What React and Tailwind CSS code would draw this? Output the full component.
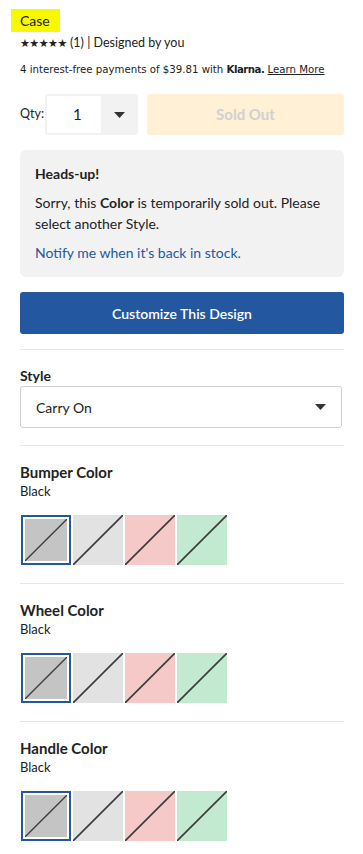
import React from 'react';

const font = { fontFamily: 'Lato, "Open Sans", sans-serif' };

const swatches = ['#c4c4c4', '#e2e2e2', '#f6c9c9', '#c2ead0'];

const Swatch = ({ color, selected }) => (
    <div
        className={`w-[50px] h-[50px] ${selected ? 'border-2 border-[#2358a0] p-[2px] bg-white' : ''}`}
    >
        <svg className="block w-full h-full" viewBox="0 0 10 10" preserveAspectRatio="none">
            <rect width="10" height="10" fill={color} />
            <line x1="0" y1="10" x2="10" y2="0" stroke="#3a3a3a" strokeWidth="0.32" />
        </svg>
    </div>
);

const ColorSection = ({ title }) => (
    <div className="border-t border-[#e6e6e6] pt-[16px] pb-[18px]">
        <h3 className="text-[15px] leading-[20px] font-bold text-[#222]">{title}</h3>
        <p className="text-[13px] leading-[18px] text-[#222]">Black</p>
        <div className="flex gap-[2px] mt-[15px] ml-[1px]">
            {swatches.map((c, i) => (
                <Swatch key={c} color={c} selected={i === 0} />
            ))}
        </div>
    </div>
);

const Caret = ({ className }) => (
    <svg className={className} width="11" height="6" viewBox="0 0 11 6">
        <path d="M0 0 L11 0 L5.5 6 Z" fill="#333" />
    </svg>
);

const App = () => {
    return (
        <div className="bg-white min-h-[854px] pl-[20px] pr-[19px] text-[#222]" style={font}>
            <div className="pt-[8px]">
                <span className="inline-block -ml-[9px] pl-[9px] pr-[10px] h-[23px] leading-[23px] bg-[#f8f800] text-[14px]">
                    Case
                </span>
            </div>
            <p className="text-[12.5px] leading-[17px] mt-[2px]">
                <span className="text-[11px] tracking-[-0.5px]" style={{ fontFamily: '"DejaVu Sans", sans-serif' }}>
                    ★★★★★
                </span>{' '}
                (1) | Designed by you
            </p>
            <p
                className="text-[10.2px] leading-[16px] mt-[10px]"
                style={{ fontFamily: '"DejaVu Sans", sans-serif' }}
            >
                4 interest-free payments of $39.81 with <b className="font-extrabold tracking-[-0.5px]">Klarna.</b>{' '}
                <span className="underline">Learn More</span>
            </p>

            <div className="flex items-center mt-[16px] h-[41px]">
                <span className="text-[12.5px] w-[25px]">Qty:</span>
                <div className="flex items-center h-[41px] w-[93px] bg-[#f2f2f2] rounded-[3px] p-[2px]">
                    <div className="h-full w-[54px] bg-white flex items-center pl-[26px] text-[15px]">1</div>
                    <Caret className="ml-[13px]" />
                </div>
                <button className="ml-[9px] flex-1 h-[41px] rounded-[3px] bg-[#fff0d6] text-[#d0d0d0] text-[15px] font-bold">
                    Sold Out
                </button>
            </div>

            <div className="mt-[15px] bg-[#f2f2f2] rounded-[6px] px-[15px] pt-[15px] pb-[14px]">
                <h4 className="text-[14px] leading-[18px] font-bold">Heads-up!</h4>
                <p className="text-[14px] leading-[21px] mt-[9px]">
                    Sorry, this <b>Color</b> is temporarily sold out. Please select another Style.
                </p>
                <p className="text-[14px] leading-[21px] mt-[8px] text-[#2358a0]">Notify me when it's back in stock.</p>
            </div>

            <button className="mt-[15px] w-full h-[42px] rounded-[3px] bg-[#2358a0] text-white text-[14px] font-semibold">
                Customize This Design
            </button>

            <div className="mt-[15px] border-t border-[#e6e6e6] pt-[17px] pb-[17px]">
                <h3 className="text-[14px] leading-[18px] font-bold">Style</h3>
                <div className="mt-[1px] h-[42px] w-[322px] border border-[#cfcfcf] rounded-[3px] flex items-center justify-between pl-[15px] pr-[15px]">
                    <span className="text-[14px]">Carry On</span>
                    <Caret />
                </div>
            </div>

            <ColorSection title="Bumper Color" />
            <ColorSection title="Wheel Color" />
            <ColorSection title="Handle Color" />
        </div>
    );
};

export default App;
